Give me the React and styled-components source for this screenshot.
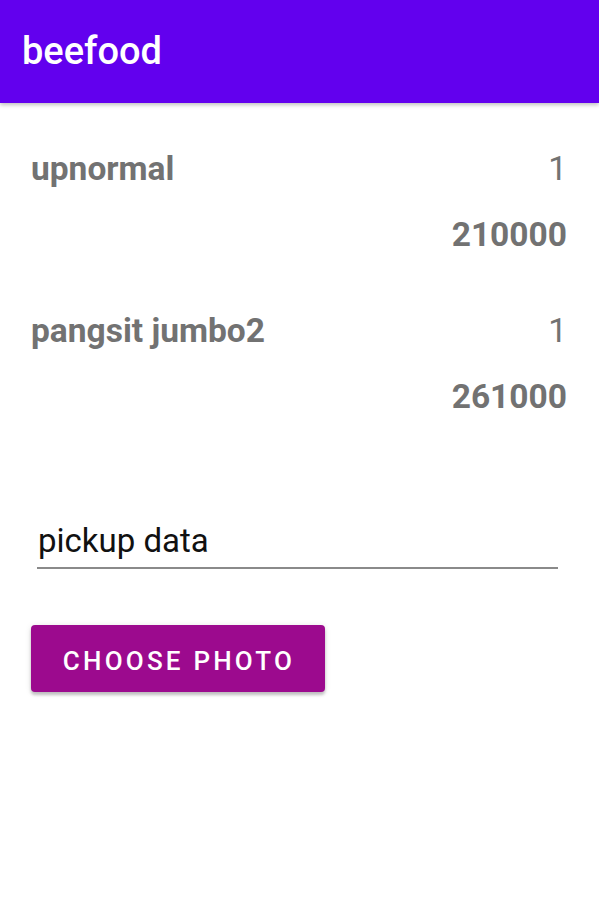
import React from "react";
import styled, { createGlobalStyle } from "styled-components";

const Global = createGlobalStyle`
  html, body { margin: 0; padding: 0; background: #fff; }
  body { font-family: Roboto, "Noto Sans", sans-serif; }
  * { box-sizing: border-box; }
`;

const Page = styled.div`
  width: 599px;
  min-height: 900px;
  background: #fff;
`;

const AppBar = styled.header`
  height: 103px;
  background: #6200ee;
  display: flex;
  align-items: center;
  padding-left: 22px;
  padding-bottom: 1px;
  box-shadow: 0 2px 4px rgba(0, 0, 0, 0.25);
  position: relative;
  z-index: 1;
`;

const Title = styled.h1`
  margin: 0;
  color: #fff;
  font-size: 38px;
  font-weight: 500;
  letter-spacing: 0;
`;

const Content = styled.main`
  padding: 46px 32px 0 31px;
  display: flex;
  flex-direction: column;
`;

const Item = styled.section`
  display: grid;
  grid-template-columns: 1fr auto;
  row-gap: 26px;
  margin-bottom: 56px;
`;

const Text = styled.div`
  font-size: 33.5px;
  line-height: 40px;
  color: #727272;
  font-weight: ${(p) => (p.$bold ? 700 : 400)};
  text-align: ${(p) => (p.$right ? "right" : "left")};
  grid-column: ${(p) => p.$col || "auto"};
`;

const Field = styled.div`
  margin: 48px 9px 0 6px;
  border-bottom: 2px solid #8a8a8a;
  padding: 0 0 6px 1px;
`;

const FieldText = styled.div`
  font-size: 33px;
  line-height: 40px;
  color: #111;
`;

const Button = styled.button`
  margin-top: 56px;
  align-self: flex-start;
  width: 294px;
  height: 67px;
  border: none;
  border-radius: 4px;
  background: #9c0a8e;
  color: #fff;
  font-family: Roboto, "Noto Sans", sans-serif;
  font-size: 26px;
  font-weight: 500;
  letter-spacing: 3.2px;
  text-transform: uppercase;
  padding: 4px 0 0 2px;
  box-shadow: 0 3px 3px rgba(0, 0, 0, 0.2), 0 1px 6px rgba(0, 0, 0, 0.12);
`;

const items = [
  { name: "upnormal", qty: 1, price: 210000 },
  { name: "pangsit jumbo2", qty: 1, price: 261000 },
];

export default function App() {
  return (
    <Page>
      <Global />
      <AppBar>
        <Title>beefood</Title>
      </AppBar>
      <Content>
        {items.map((it) => (
          <Item key={it.name}>
            <Text $bold>{it.name}</Text>
            <Text $right>{it.qty}</Text>
            <Text $bold $right $col="1 / span 2">
              {it.price}
            </Text>
          </Item>
        ))}
        <Field>
          <FieldText>pickup data</FieldText>
        </Field>
        <Button>Choose Photo</Button>
      </Content>
    </Page>
  );
}
